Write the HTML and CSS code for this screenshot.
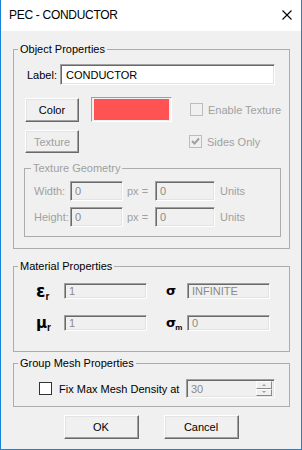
FILE: index.html
```html
<!DOCTYPE html>
<html lang="en">
<head>
    <meta charset="UTF-8">
    <title>PEC - CONDUCTOR</title>
    <link rel="stylesheet" href="styles.css">
</head>
<body>

<div class="window">
    <div class="titlebar">
        <span class="title">PEC - CONDUCTOR</span>
        <svg class="close" width="10" height="10" viewBox="0 0 10 10">
            <path d="M0.5 0.5 L9.5 9.5 M9.5 0.5 L0.5 9.5" stroke="#000" stroke-width="1.1" fill="none"/>
        </svg>
    </div>

    <div class="content">
        <fieldset class="group group-object">
            <legend>Object Properties</legend>
            <div class="row label-row">
                <span class="label-text">Label:</span>
                <div class="field field-label">CONDUCTOR</div>
            </div>
            <div class="row color-row">
                <div class="btn btn-color">Color</div>
                <div class="swatch"><div class="swatch-fill"></div></div>
                <div class="check check-disabled"><span class="box"></span><span class="check-text">Enable Texture</span></div>
            </div>
            <div class="row texture-row">
                <div class="btn btn-texture disabled">Texture</div>
                <div class="check check-disabled check-sides"><span class="box">
                    <svg width="11" height="11" viewBox="0 0 11 11"><path d="M2 5 L4.5 7.5 L9 2.5" stroke="#a0a0a0" stroke-width="2" fill="none"/></svg>
                </span><span class="check-text">Sides Only</span></div>
            </div>

            <fieldset class="group group-geometry">
                <legend>Texture Geometry</legend>
                <div class="row geo-row">
                    <span class="geo-label">Width:</span>
                    <div class="field disabled geo-px">0</div>
                    <span class="geo-eq">px =</span>
                    <div class="field disabled geo-units">0</div>
                    <span class="geo-unit">Units</span>
                </div>
                <div class="row geo-row">
                    <span class="geo-label">Height:</span>
                    <div class="field disabled geo-px">0</div>
                    <span class="geo-eq">px =</span>
                    <div class="field disabled geo-units">0</div>
                    <span class="geo-unit">Units</span>
                </div>
            </fieldset>
        </fieldset>

        <fieldset class="group group-material">
            <legend>Material Properties</legend>
            <div class="material-grid">
                <span class="sym sym-eps">ε<sub>r</sub></span>
                <div class="field disabled mat-field">1</div>
                <span></span>
                <span class="sym sym-sigma">σ</span>
                <div class="field disabled mat-field">INFINITE</div>

                <span class="sym sym-mu">μ<sub>r</sub></span>
                <div class="field disabled mat-field">1</div>
                <span></span>
                <span class="sym sym-sigma">σ<sub>m</sub></span>
                <div class="field disabled mat-field">0</div>
            </div>
        </fieldset>

        <fieldset class="group group-mesh">
            <legend>Group Mesh Properties</legend>
            <div class="row mesh-row">
                <div class="check"><span class="box box-enabled"></span><span class="check-text enabled">Fix Max Mesh Density at</span></div>
                <div class="field disabled spin">
                    <span class="spin-value">30</span>
                    <div class="spin-buttons">
                        <div class="spin-btn"><span class="arrow-up"></span></div>
                        <div class="spin-btn"><span class="arrow-down"></span></div>
                    </div>
                </div>
            </div>
        </fieldset>

        <div class="actions">
            <div class="btn btn-action">OK</div>
            <div class="btn btn-action">Cancel</div>
        </div>
    </div>
</div>

</body>
</html>
```

FILE: styles.css
```css
* { box-sizing: border-box; }
body { margin: 0; padding: 0; font-family: "Liberation Sans", Arial, sans-serif; font-size: 11px; color: #000; background: #f0f0f0; }

.window { width: 302px; height: 450px; border: 1px solid #1883d7; border-top: none; background: #f0f0f0; }
.titlebar { height: 31px; background: #fff; display: flex; align-items: center; justify-content: space-between; padding: 0 9px 1px 8px; }
.title { font-size: 12px; letter-spacing: -0.3px; color: #000; }
.close { margin-top: 0; margin-right: 0; }

.content { padding: 0 11px 0 12px; }

.group { margin: 0; padding: 0; border: 1px solid #acacac; min-width: 0; }
.group legend { font-size: 11px; line-height: 13px; padding: 0 2px; margin-left: 4px; }
.group-object { margin-top: 12px; padding-bottom: 11px; }
.group-geometry { margin: 9px 0 0 10px; width: 257px; padding-bottom: 9px; }
.group-geometry legend { margin-left: 6px; color: #a0a0a0; }
.group-material { margin-top: 11px; padding-bottom: 20px; }
.group-mesh { margin-top: 5px; padding-bottom: 8px; }

.row { display: flex; align-items: center; }

.field { height: 20px; border: 1px solid; border-color: #a0a0a0 #fff #fff #a0a0a0; box-shadow: inset 1px 1px #696969, inset -1px -1px #e3e3e3; background: #fff; padding: 0 4px; display: flex; align-items: center; white-space: nowrap; }
.field.disabled { background: #f0f0f0; color: #8a8a8a; }

.label-row { margin-top: 8px; padding-left: 13px; }
.label-text { width: 33px; }
.field-label { width: 215px; height: 21px; padding-left: 5px; }

.btn { height: 23px; width: 54px; display: flex; align-items: center; justify-content: center; background: #f0f0f0; border: 1px solid; border-color: #fff #696969 #696969 #fff; box-shadow: inset -1px -1px #a0a0a0, inset 1px 1px #e3e3e3; }
.btn.disabled { color: #a0a0a0; }

.color-row { margin-top: 12px; height: 25px; padding-left: 11px; }
.btn-color { height: 24px; }
.swatch { margin-left: 12px; width: 81px; height: 25px; border: 1px solid; border-color: #a0a0a0 #fff #fff #a0a0a0; padding: 1px 2px; }
.swatch-fill { width: 100%; height: 100%; background: #ff5252; }

.check { display: flex; align-items: center; }
.check .box { width: 13px; height: 13px; border: 1px solid #bcbcbc; background: #f0f0f0; display: flex; align-items: center; justify-content: center; }
.check .box-enabled { border-color: #333; background: #fff; }
.check-text { margin-left: 5px; color: #a0a0a0; }
.check-text.enabled { margin-left: 7px; color: #000; }
.check-disabled { margin-left: 18px; }

.texture-row { margin-top: 8px; height: 23px; padding-left: 11px; }
.check-sides { margin-left: 110px; }

.geo-row { margin-top: 6px; padding-left: 9px; color: #a0a0a0; }
.geo-label { width: 36px; }
.geo-px { width: 53px; }
.geo-eq { width: 32px; padding-left: 4px; }
.geo-units { width: 60px; }
.geo-unit { margin-left: 5px; }

.material-grid { margin-top: 10px; padding-left: 22px; display: grid; grid-template-columns: 28px 83px 19px 21px 83px; grid-auto-rows: 16px; row-gap: 16px; align-items: center; }
.mat-field { height: 16px; }
.sym { font-family: "DejaVu Sans", sans-serif; font-weight: bold; line-height: 16px; white-space: nowrap; }
.sym sub { font-family: "Liberation Sans", Arial, sans-serif; font-size: 10px; vertical-align: -3px; line-height: 0; }
.sym-eps { font-size: 17px; }
.sym-mu { font-size: 15px; }
.sym-sigma { font-size: 13px; }
.sym-sigma sub { font-size: 8px; margin-left: -1px; }

.mesh-row { margin-top: 9px; padding-left: 25px; padding-right: 14px; justify-content: space-between; }
.spin { width: 89px; height: 19px; padding: 0 2px 0 4px; justify-content: space-between; }
.spin-buttons { display: flex; flex-direction: column; width: 16px; height: 15px; }
.spin-btn { flex: 1; display: flex; align-items: center; justify-content: center; background: #f0f0f0; border: 1px solid; border-color: #fff #8a8a8a #8a8a8a #fff; }
.arrow-up { width: 0; height: 0; border-left: 2px solid transparent; border-right: 2px solid transparent; border-bottom: 2px solid #a0a0a0; }
.arrow-down { width: 0; height: 0; border-left: 2px solid transparent; border-right: 2px solid transparent; border-top: 2px solid #a0a0a0; }

.actions { margin-top: 8px; display: flex; justify-content: center; gap: 25px; padding-right: 1px; }
.btn-action { width: 75px; height: 24px; }
```
